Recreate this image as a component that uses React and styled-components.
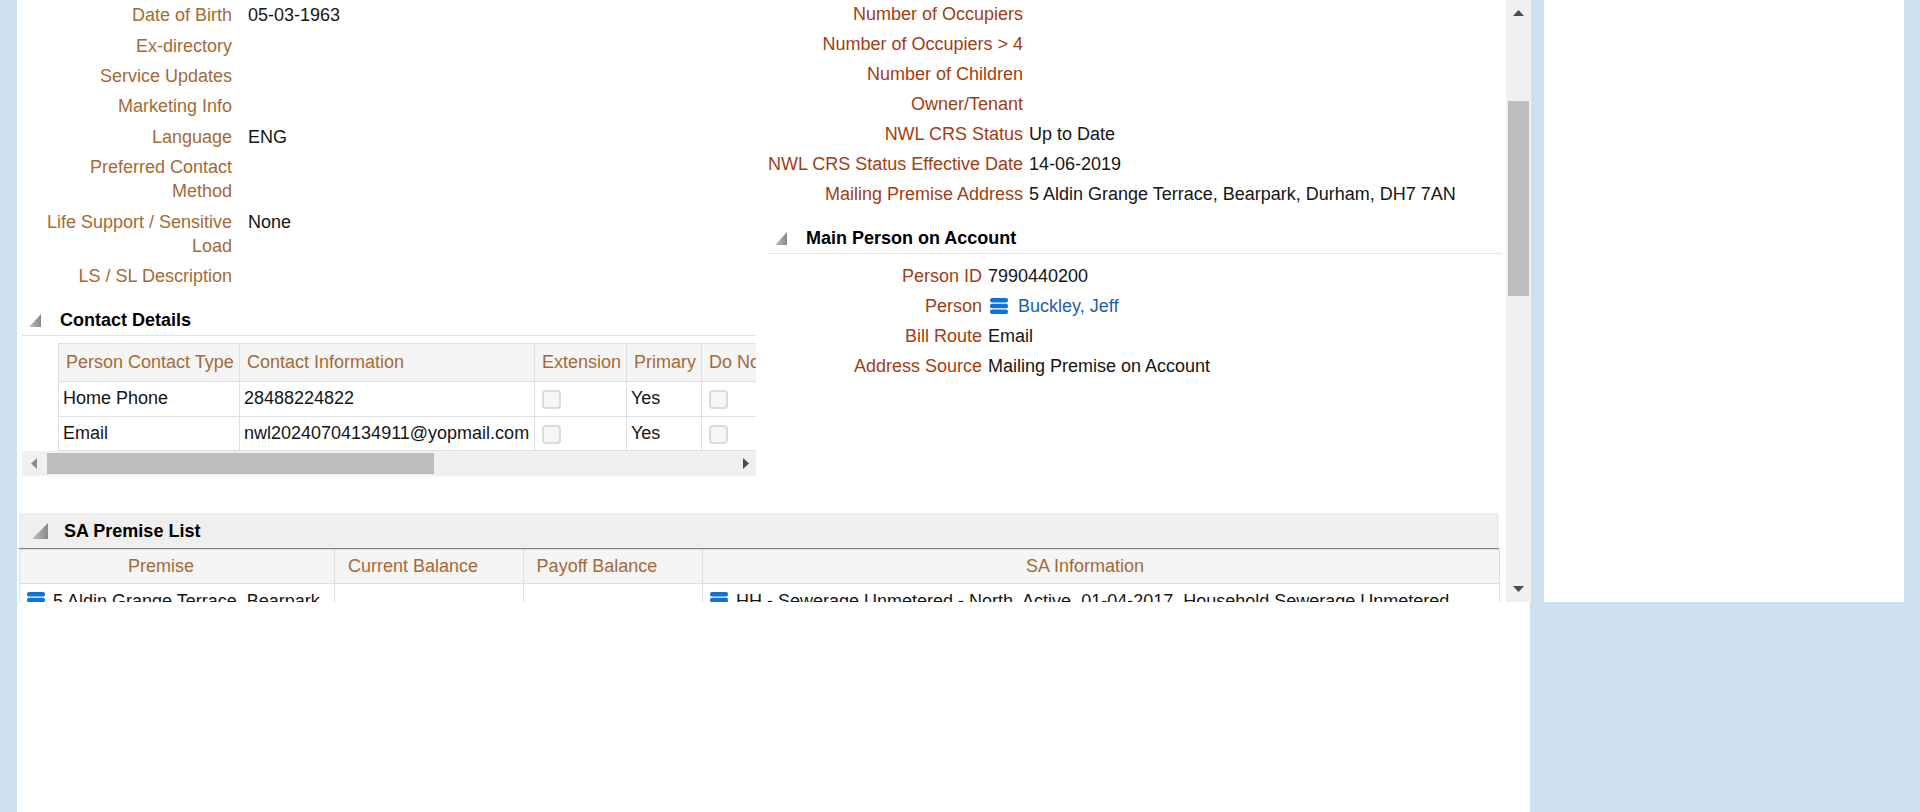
import React from "react";
import styled, { createGlobalStyle } from "styled-components";

const GlobalStyle = createGlobalStyle`
  html, body {
    margin: 0;
    padding: 0;
    background: #cde0ef;
    font-family: "Liberation Sans", Arial, sans-serif;
    font-size: 18px;
    color: #161513;
    overflow: hidden;
  }
`;

const Page = styled.div`
  display: flex;
  align-items: flex-start;
  height: 812px;
  padding-left: 17px;
`;

const Main = styled.main`
  flex: none;
  width: 1513px;
  height: 812px;
  background: #fff;
`;

const ScrollPane = styled.div`
  display: flex;
  height: 602px;
`;

const Content = styled.div`
  flex: none;
  width: 1489px;
  height: 602px;
  overflow: hidden;
`;

const Columns = styled.div`
  display: grid;
  grid-template-columns: 734px 734px;
  column-gap: 12px;
  padding-left: 5px;
  height: 495px;
  margin-bottom: 18px;
`;

const Column = styled.div`
  min-width: 0;
`;

const FormRows = styled.div`
  margin-top: ${(p) => p.$shift || 0}px;
  padding-top: ${(p) => p.$top || 0}px;
`;

const Row = styled.div`
  display: grid;
  grid-template-columns: ${(p) => p.$label}px 1fr;
  column-gap: ${(p) => p.$gap}px;
  padding-left: ${(p) => p.$indent}px;
  padding-block: ${(p) => p.$pad}px;
  line-height: 24px;
`;

const Label = styled.div`
  text-align: right;
  color: ${(p) => p.$color};
  white-space: ${(p) => (p.$nowrap ? "nowrap" : "normal")};
`;

const Value = styled.div`
  display: flex;
  align-items: center;
  white-space: nowrap;
  height: 24px;
`;

const PersonLink = styled.a`
  display: flex;
  align-items: center;
  gap: 10px;
  margin-left: 2px;
  color: #1d5fa8;
`;

const SectionHeader = styled.div`
  display: flex;
  align-items: center;
  box-sizing: border-box;
  height: 31px;
  margin-top: ${(p) => p.$top}px;
  padding: ${(p) => p.$nudge || 0}px 0 0 7px;
  border-bottom: 1px solid #dfe4e8;
  font-weight: 700;
  color: #000;
`;

const Triangle = styled.svg`
  flex: none;
  display: block;
  margin-right: ${(p) => p.$gap}px;
`;

const TableClip = styled.div`
  margin-top: 7px;
  padding-left: 36px;
  overflow: hidden;
`;

const Table = styled.table`
  table-layout: fixed;
  border-collapse: collapse;
  width: ${(p) => p.$width}px;
`;

const Th = styled.th`
  height: ${(p) => p.$height || 36}px;
  padding: ${(p) => (p.$center ? "0 32px 0 0" : "1px 0 0 7px")};
  background: #f5f5f5;
  border: 1px solid #d9e0e6;
  color: #a36a37;
  font-weight: 400;
  text-align: ${(p) => (p.$center ? "center" : "left")};
  white-space: nowrap;
  overflow: hidden;
`;

const Td = styled.td`
  height: ${(p) => p.$height || 32}px;
  padding: 1px 0 1px 4px;
  border: 1px solid #d9e0e6;
  white-space: nowrap;
  overflow: hidden;
`;

const SaTd = styled.td`
  height: 60px;
  padding: 5px 0 0 7px;
  vertical-align: top;
  border: 1px solid #d9e0e6;
  white-space: nowrap;
  overflow: hidden;
`;

const Check = styled.input.attrs({ type: "checkbox", disabled: true })`
  appearance: none;
  display: block;
  box-sizing: border-box;
  width: 19px;
  height: 19px;
  margin: 2px 0 0 3px;
  background: #f6f6f6;
  border: 2px solid #dadada;
  border-radius: 4px;
`;

const HScroll = styled.div`
  display: flex;
  align-items: center;
  justify-content: space-between;
  position: relative;
  height: 25px;
  padding: 0 7px 0 9px;
  background: #f0f0f0;
`;

const HThumb = styled.div`
  position: absolute;
  left: 25px;
  top: 2px;
  width: 387px;
  height: 21px;
  background: #bdbdbd;
`;

const SaSection = styled.section`
  margin-left: 2px;
  width: 1480px;
`;

const SaHeader = styled.div`
  display: flex;
  align-items: center;
  box-sizing: border-box;
  height: 36px;
  padding: 1px 0 0 13px;
  background: #efefef;
  border-bottom: 1px solid #808080;
  font-weight: 700;
  color: #000;
`;

const SaCell = styled.div`
  display: flex;
  align-items: flex-start;
  gap: 8px;
  line-height: 24px;
  white-space: nowrap;

  svg {
    margin-top: 3px;
  }
`;

const VScroll = styled.div`
  flex: none;
  position: relative;
  display: flex;
  flex-direction: column;
  align-items: center;
  justify-content: space-between;
  width: 25px;
  height: 602px;
  margin-right: -1px;
  padding: 10px 0;
  box-sizing: border-box;
  background: #f0f0f0;
`;

const VThumb = styled.div`
  position: absolute;
  top: 101px;
  left: 2px;
  width: 21px;
  height: 195px;
  background: #bdbdbd;
`;

const SidePanel = styled.aside`
  flex: none;
  width: 360px;
  height: 602px;
  margin-left: 14px;
  background: #fff;
`;

const CornerIcon = ({ size = 12, height = 13, gap = 19 }) => (
  <Triangle $gap={gap} width={size} height={height} viewBox="0 0 12 12" preserveAspectRatio="none">
    <defs>
      <linearGradient id="corner" x1="0" y1="0" x2="1" y2="0">
        <stop offset="0" stopColor="#c2c4c6" />
        <stop offset="1" stopColor="#84888c" />
      </linearGradient>
    </defs>
    <polygon points="12,0 12,12 0,12" fill="url(#corner)" />
  </Triangle>
);

const ListIcon = () => (
  <svg width="18" height="16" viewBox="0 0 18 16" style={{ flex: "none", display: "block" }}>
    <rect x="0" y="0" width="18" height="4.6" rx="2" fill="#0f72d6" />
    <rect x="0" y="5.7" width="18" height="4.6" rx="2" fill="#0f72d6" />
    <rect x="0" y="11.4" width="18" height="4.6" rx="2" fill="#0f72d6" />
  </svg>
);

const Arrow = ({ dir }) => {
  const points = {
    up: "5.5,0 11,6 0,6",
    down: "0,0 11,0 5.5,6",
    left: "6,0 6,11 0,5.5",
    right: "0,0 6,5.5 0,11",
  }[dir];
  const vertical = dir === "up" || dir === "down";
  return (
    <svg width={vertical ? 11 : 6} height={vertical ? 6 : 11} viewBox={vertical ? "0 0 11 6" : "0 0 6 11"} style={{ position: "relative", display: "block" }}>
      <polygon points={points} fill={dir === "left" ? "#8c8c8c" : "#4d4d4d"} />
    </svg>
  );
};

const leftRows = [
  ["Date of Birth", "05-03-1963"],
  ["Ex-directory", ""],
  ["Service Updates", ""],
  ["Marketing Info", ""],
  ["Language", "ENG"],
  ["Preferred Contact Method", ""],
  ["Life Support / Sensitive Load", "None"],
  ["LS / SL Description", ""],
];

const rightRows = [
  ["Number of Occupiers", ""],
  ["Number of Occupiers > 4", ""],
  ["Number of Children", ""],
  ["Owner/Tenant", ""],
  ["NWL CRS Status", "Up to Date"],
  ["NWL CRS Status Effective Date", "14-06-2019"],
  ["Mailing Premise Address", "5 Aldin Grange Terrace, Bearpark, Durham, DH7 7AN"],
];

const personRows = [
  ["Person ID", "7990440200"],
  ["Person", "link"],
  ["Bill Route", "Email"],
  ["Address Source", "Mailing Premise on Account"],
];

const contacts = [
  ["Home Phone", "28488224822", 32],
  ["Email", "nwl20240704134911@yopmail.com", 31],
];

export default function App() {
  return (
    <>
      <GlobalStyle />
      <Page>
        <Main>
          <ScrollPane>
            <Content>
              <Columns>
                <Column>
                  <FormRows>
                    {leftRows.map(([label, value]) => (
                      <Row key={label} $label={196} $gap={16} $indent={14} $pad={3.21}>
                        <Label $color="#a36a37">{label}</Label>
                        <Value>{value}</Value>
                      </Row>
                    ))}
                  </FormRows>
                  <SectionHeader $top={13.7} $nudge={2}>
                    <CornerIcon />
                    Contact Details
                  </SectionHeader>
                  <TableClip>
                    <Table $width={900}>
                      <colgroup>
                        <col width="181" />
                        <col width="295" />
                        <col width="92" />
                        <col width="75" />
                        <col width="257" />
                      </colgroup>
                      <thead>
                        <tr>
                          <Th>Person Contact Type</Th>
                          <Th>Contact Information</Th>
                          <Th>Extension</Th>
                          <Th>Primary</Th>
                          <Th>Do Not Call</Th>
                        </tr>
                      </thead>
                      <tbody>
                        {contacts.map(([type, info, height]) => (
                          <tr key={type}>
                            <Td $height={height}>{type}</Td>
                            <Td $height={height}>{info}</Td>
                            <Td $height={height}><Check /></Td>
                            <Td $height={height}>Yes</Td>
                            <Td $height={height}><Check /></Td>
                          </tr>
                        ))}
                      </tbody>
                    </Table>
                  </TableClip>
                  <HScroll>
                    <Arrow dir="left" />
                    <HThumb />
                    <Arrow dir="right" />
                  </HScroll>
                </Column>
                <Column>
                  <FormRows $shift={-1}>
                    {rightRows.map(([label, value]) => (
                      <Row key={label} $label={255} $gap={6} $indent={0} $pad={3}>
                        <Label $color="#a23d12" $nowrap>{label}</Label>
                        <Value>{value}</Value>
                      </Row>
                    ))}
                  </FormRows>
                  <SectionHeader $top={14}>
                    <CornerIcon />
                    Main Person on Account
                  </SectionHeader>
                  <FormRows $top={7}>
                    {personRows.map(([label, value]) => (
                      <Row key={label} $label={214} $gap={6} $indent={0} $pad={3}>
                        <Label $color="#a23d12">{label}</Label>
                        <Value>
                          {value === "link" ? (
                            <PersonLink>
                              <ListIcon />
                              Buckley, Jeff
                            </PersonLink>
                          ) : (
                            value
                          )}
                        </Value>
                      </Row>
                    ))}
                  </FormRows>
                </Column>
              </Columns>
              <SaSection>
                <SaHeader>
                  <CornerIcon size={16} height={16} gap={16} />
                  SA Premise List
                </SaHeader>
                <Table $width={1480}>
                  <colgroup>
                    <col width="315" />
                    <col width="189" />
                    <col width="179" />
                    <col width="797" />
                  </colgroup>
                  <thead>
                    <tr>
                      <Th $center $height={33}>Premise</Th>
                      <Th $center $height={33}>Current Balance</Th>
                      <Th $center $height={33}>Payoff Balance</Th>
                      <Th $center $height={33}>SA Information</Th>
                    </tr>
                  </thead>
                  <tbody>
                    <tr>
                      <SaTd>
                        <SaCell>
                          <ListIcon />
                          5 Aldin Grange Terrace, Bearpark
                        </SaCell>
                      </SaTd>
                      <SaTd />
                      <SaTd />
                      <SaTd>
                        <SaCell>
                          <ListIcon />
                          HH - Sewerage Unmetered - North, Active, 01-04-2017, Household Sewerage Unmetered
                        </SaCell>
                      </SaTd>
                    </tr>
                  </tbody>
                </Table>
              </SaSection>
            </Content>
            <VScroll>
              <Arrow dir="up" />
              <VThumb />
              <Arrow dir="down" />
            </VScroll>
          </ScrollPane>
        </Main>
        <SidePanel />
      </Page>
    </>
  );
}
